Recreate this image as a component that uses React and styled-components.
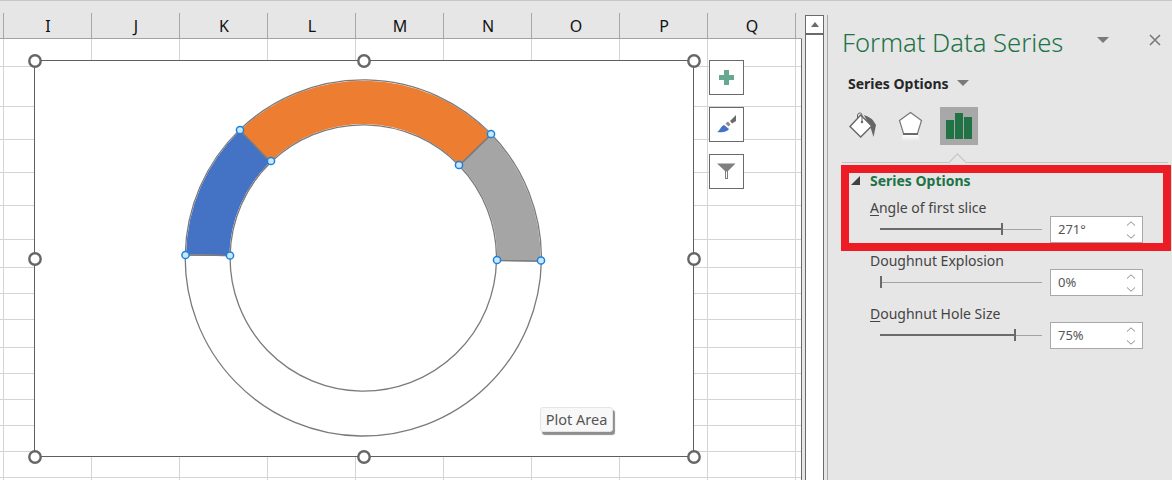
import React from 'react'
import styled, { createGlobalStyle } from 'styled-components'

const UI_FONT = '"Noto Sans", "Open Sans", "Liberation Sans", sans-serif'

const columns = ['I', 'J', 'K', 'L', 'M', 'N', 'O', 'P', 'Q']
const rowHeights = [28, 40, 33, 33, 33, 34, 28, 26, 26, 28, 26, 26, 26, 26, 26, 3]

const CX = 363.3
const CY = 258
const OUTER = 177.8
const INNER = 133.5

const slices = [
  { from: 271, to: 316, fill: '#4472c4' },
  { from: 316, to: 406, fill: '#ed7d31' },
  { from: 406, to: 451, fill: '#a5a5a5' },
  { from: 451, to: 631, fill: 'none' },
]

const handles = [
  [35, 61], [364, 61], [694, 61],
  [35, 259], [694, 259],
  [35, 457], [364, 457], [694, 457],
]

const points = [
  [240, 130], [271, 161], [491, 134], [459, 165],
  [185.5, 255], [230, 255.5], [497, 260], [541, 260.5],
]

const fields = [
  { label: 'Angle of first slice', key: 'A', rest: 'ngle of first slice', value: '271°', fill: 122 },
  { label: 'Doughnut Explosion', rest: 'Doughnut Explosion', value: '0%', fill: 1 },
  { label: 'Doughnut Hole Size', key: 'D', rest: 'oughnut Hole Size', value: '75%', fill: 135 },
]

const polar = (r, deg) => {
  const a = (deg * Math.PI) / 180
  return [CX + r * Math.sin(a), CY - r * Math.cos(a)]
}

const slicePath = (from, to, grow = 0) => {
  const ro = OUTER + grow
  const ri = INNER - grow
  const large = to - from > 180 ? 1 : 0
  const [ax, ay] = polar(ro, from)
  const [bx, by] = polar(ro, to)
  const [cx, cy] = polar(ri, to)
  const [dx, dy] = polar(ri, from)
  return `M${ax} ${ay}A${ro} ${ro} 0 ${large} 1 ${bx} ${by}L${cx} ${cy}A${ri} ${ri} 0 ${large} 0 ${dx} ${dy}Z`
}

const Global = createGlobalStyle`
  html, body {
    margin: 0;
    padding: 0;
    overflow: hidden;
    background: #e6e6e6;
  }
  * {
    box-sizing: border-box;
  }
`

const Window = styled.div`
  display: flex;
  width: 1172px;
  height: 480px;
  overflow: hidden;
  background: #e6e6e6;
  border-top: 1px solid #c6c6c6;
  font-family: ${UI_FONT};
`

const Sheet = styled.div`
  position: relative;
  width: 802px;
  flex: none;
`

const ColumnBar = styled.div`
  display: flex;
  height: 38px;
  border-bottom: 1px solid #a3a3a3;
`

const ColumnHead = styled.div`
  width: ${(p) => p.$w}px;
  display: flex;
  align-items: center;
  justify-content: center;
  padding-top: 13px;
  font-size: 16px;
  line-height: 24px;
  color: #111;
  background: linear-gradient(#a8a8a8, #a8a8a8) right bottom / 1px 25px no-repeat;
`

const Cells = styled.div`
  background: #fff;
  border-right: 1px solid #6a6a6a;
`

const Row = styled.div`
  display: flex;
  height: ${(p) => p.$h}px;
  border-bottom: 1px solid #d4d4d4;
`

const Cell = styled.div`
  width: ${(p) => p.$w}px;
  border-right: 1px solid #d4d4d4;
`

const ChartFrame = styled.div`
  position: absolute;
  left: 34px;
  top: 59px;
  width: 660px;
  height: 397px;
  background: #fff;
  border: 1px solid #5f5f5f;
`

const ChartArt = styled.svg`
  position: absolute;
  left: -1px;
  top: -1px;
  overflow: visible;
`

const ChartTools = styled.div`
  position: absolute;
  left: 709px;
  top: 59px;
  display: flex;
  flex-direction: column;
  gap: 12px;
`

const ToolButton = styled.div`
  width: 35px;
  height: 35px;
  background: #fff;
  border: 1px solid #6a6a6a;
`

const Tip = styled.div`
  position: absolute;
  left: 540px;
  top: 406px;
  width: 73px;
  height: 25px;
  display: flex;
  align-items: center;
  justify-content: center;
  padding-bottom: 2px;
  font-size: 14.5px;
  color: #555;
  background: #f8f8f8;
  border: 1px solid #e4e4e4;
  border-radius: 3px;
  box-shadow: 2px 3px 1px #8e8e8e;
`

const ScrollColumn = styled.div`
  width: 26px;
  flex: none;
  display: flex;
  justify-content: space-between;
  padding: 14px 0 0 3px;
`

const Scrollbar = styled.div`
  width: 19px;
  background: #fff;
  border: 1px solid #6a6a6a;
  border-bottom: 0;
`

const ScrollUp = styled.div`
  height: 19px;
  display: flex;
  align-items: center;
  justify-content: center;
  border-bottom: 2px solid #6a6a6a;

  &::before {
    content: '';
    border-left: 4px solid transparent;
    border-right: 4px solid transparent;
    border-bottom: 5px solid #6a6a6a;
  }
`

const PaneEdge = styled.div`
  width: 1px;
  background: #a9a9a9;
`

const Pane = styled.aside`
  position: relative;
  flex: 1;
  padding-top: 22px;
  color: #444;
`

const PaneHeader = styled.header`
  display: flex;
  align-items: center;
  height: 36px;
  padding-left: 14px;
`

const PaneTitle = styled.h1`
  margin: 4px 0 0;
  flex: 1;
  font-size: 25.6px;
  font-weight: 300;
  line-height: 36px;
  white-space: nowrap;
  color: #217346;
`

const Caret = styled.span`
  width: 0;
  height: 0;
  flex: none;
  border-left: 6px solid transparent;
  border-right: 6px solid transparent;
  border-top: 6px solid #7a7a7a;
`

const MenuCaret = styled(Caret)`
  margin-right: 40px;
  margin-top: -2px;
`

const CloseIcon = styled.svg`
  margin-right: 11px;
  margin-top: -2px;
  flex: none;
`

const OptionsMenu = styled.div`
  display: flex;
  align-items: center;
  gap: 8px;
  height: 20px;
  margin-top: 14px;
  padding-left: 20px;
  font-size: 14px;
  font-weight: 700;
  color: #262626;
`

const Tabs = styled.div`
  display: flex;
  gap: 10px;
  margin-top: 14px;
  padding-left: 16px;
`

const Tab = styled.div`
  width: 38px;
  height: 38px;
  background: ${(p) => (p.$active ? '#a8a8a8' : 'transparent')};
`

const TabRule = styled.div`
  position: relative;
  margin: 17px 4px 0 14px;
  height: 1px;
  background: #c4c4c4;

  &::after {
    content: '';
    position: absolute;
    left: 109px;
    top: -6px;
    width: 12px;
    height: 12px;
    background: #e6e6e6;
    border-top: 1px solid #c4c4c4;
    border-left: 1px solid #c4c4c4;
    transform: rotate(45deg);
  }
`

const SectionTitle = styled.div`
  display: flex;
  align-items: center;
  gap: 10px;
  height: 20px;
  margin-top: 7px;
  padding-left: 23px;
  font-size: 14px;
  font-weight: 700;
  color: #217346;
`

const Fields = styled.div`
  display: flex;
  flex-direction: column;
  gap: 8px;
  margin-top: 8px;
  padding-left: 42px;
`

const FieldLabel = styled.div`
  height: 18px;
  font-size: 14px;
  line-height: 19px;
  color: #444;

  u {
    text-underline-offset: 2px;
  }
`

const FieldControls = styled.div`
  display: flex;
  align-items: center;
  height: 27px;
  padding-left: 10px;
`

const Slider = styled.div`
  position: relative;
  width: 162px;
  height: 1px;
  background: #a3a3a3;
`

const SliderFill = styled.div`
  position: absolute;
  left: 0;
  top: -1px;
  height: 2px;
  background: #6a6a6a;
`

const SliderThumb = styled.div`
  position: absolute;
  top: -6px;
  width: 2px;
  height: 12px;
  background: #6a6a6a;
`

const Spinner = styled.div`
  display: flex;
  align-items: center;
  justify-content: space-between;
  width: 93px;
  height: 27px;
  margin-left: 8px;
  padding: 0 6px 0 7px;
  font-size: 13px;
  color: #555;
  background: #fff;
  border: 1px solid #a8a8a8;
`

const SpinnerValue = styled.span`
  margin-bottom: 2px;
`

const Arrows = styled.div`
  display: flex;
  flex-direction: column;
  gap: 8px;
`

const Callout = styled.div`
  position: absolute;
  left: 13px;
  top: 164px;
  width: 330px;
  height: 86px;
  border: 8px solid #ed1c24;
`

const Chevron = ({ up }) => (
  <svg width="10" height="5" viewBox="0 0 10 5" style={{ display: 'block' }}>
    <path d={up ? 'M1 4.5L5 .8L9 4.5' : 'M1 .5L5 4.2L9 .5'} fill="none" stroke="#8a8a8a" />
  </svg>
)

const FillIcon = () => (
  <svg width="38" height="38" viewBox="844 107 38 38">
    <path d="M864 115Q872 117 876 125L873.5 137L871 129Z" fill="#666" />
    <path d="M860.7 115L871.7 126L860.7 137L850 126.5Z" fill="#fff" stroke="#666" strokeWidth="1.4" />
    <path d="M857.5 119V115Q858 112.5 860.5 113Q862 113.5 862 115V121" fill="none" stroke="#666" />
    <circle cx="862" cy="122" r="1.2" fill="#666" />
  </svg>
)

const ShapeIcon = () => (
  <svg width="38" height="38" viewBox="892 107 38 38">
    <defs>
      <linearGradient id="shapeShine" x1="0" y1="0" x2="0" y2="1">
        <stop offset="0" stopColor="#fff" />
        <stop offset="1" stopColor="#fff" stopOpacity="0" />
      </linearGradient>
    </defs>
    <path d="M903 135L918 135L920 141L901 141Z" fill="url(#shapeShine)" />
    <path d="M910.5 112.5L921.5 120.5L917.5 133.5L903.5 133.5L899.5 120.5Z" fill="#fff" stroke="#777" strokeWidth="1.2" />
    <path d="M903 134H918" stroke="#6a6a6a" strokeWidth="2" />
  </svg>
)

const BarsIcon = () => (
  <svg width="38" height="38" viewBox="940 107 38 38">
    <path d="M946 120H954V139H946ZM955 113H963V139H955ZM964 117H972V139H964Z" fill="#217346" />
  </svg>
)

const PlusIcon = () => (
  <svg width="33" height="33" viewBox="0 0 33 33">
    <path d="M14 9H19V14H24V19H19V24H14V19H9V14H14Z" fill="#67a890" />
  </svg>
)

const BrushIcon = () => (
  <svg width="33" height="33" viewBox="0 0 33 33">
    <path d="M7 24C10 23 10 19 14 17L19 21C18 23 13 25 7 24Z" fill="#4472c4" />
    <path d="M15.5 15.5L18 13.5L20.5 16.5L18.5 18.5Z" fill="#8a8a8a" />
    <path d="M20 13L26 7V13L22 15.5Z" fill="#6a6a6a" />
  </svg>
)

const FunnelIcon = () => (
  <svg width="33" height="33" viewBox="0 0 33 33">
    <path d="M7 8.5H25.5L18 16V24H15V16Z" fill="#7f7f7f" />
    <path d="M16 16.5H17V23H16Z" fill="#fff" />
  </svg>
)

const App = () => {
  return (
    <>
      <Global />
      <Window>
        <Sheet>
          <ColumnBar>
            <ColumnHead $w={4} />
            {columns.map((c) => (
              <ColumnHead key={c} $w={88}>{c}</ColumnHead>
            ))}
          </ColumnBar>
          <Cells>
            {rowHeights.map((h, i) => (
              <Row key={i} $h={h}>
                <Cell $w={4} />
                {columns.map((c) => (
                  <Cell key={c} $w={88} />
                ))}
              </Row>
            ))}
          </Cells>
          <ChartFrame>
            <ChartArt width="660" height="397" viewBox="34 60 660 397">
              {slices.map((s) => (
                <path key={s.from} d={slicePath(s.from, s.to)} fill={s.fill} stroke={s.fill === 'none' ? 'none' : '#fff'} />
              ))}
              {slices.map((s) => (
                <path key={s.from} d={slicePath(s.from, s.to, 0.3)} fill="none" stroke="#7a7a7a" strokeWidth="1.3" />
              ))}
              {handles.map(([x, y]) => (
                <circle key={`${x}-${y}`} cx={x} cy={y} r="5.7" fill="#fff" stroke="#666" strokeWidth="2.4" />
              ))}
              {points.map(([x, y]) => (
                <circle key={`${x}-${y}`} cx={x} cy={y} r="3.6" fill="#cfe6f8" stroke="#1584e0" strokeWidth="1.5" />
              ))}
            </ChartArt>
          </ChartFrame>
          <ChartTools>
            <ToolButton><PlusIcon /></ToolButton>
            <ToolButton><BrushIcon /></ToolButton>
            <ToolButton><FunnelIcon /></ToolButton>
          </ChartTools>
          <Tip>Plot Area</Tip>
        </Sheet>

        <ScrollColumn>
          <Scrollbar>
            <ScrollUp />
          </Scrollbar>
          <PaneEdge />
        </ScrollColumn>

        <Pane>
          <PaneHeader>
            <PaneTitle>Format Data Series</PaneTitle>
            <MenuCaret />
            <CloseIcon width="12" height="12" viewBox="0 0 12 12">
              <path d="M1 1L11 11M11 1L1 11" stroke="#7a7a7a" strokeWidth="1.6" />
            </CloseIcon>
          </PaneHeader>
          <OptionsMenu>
            Series Options
            <Caret />
          </OptionsMenu>
          <Tabs>
            <Tab><FillIcon /></Tab>
            <Tab><ShapeIcon /></Tab>
            <Tab $active><BarsIcon /></Tab>
          </Tabs>
          <TabRule />
          <SectionTitle>
            <svg width="9" height="9" viewBox="0 0 9 9">
              <path d="M0 9H9V0Z" fill="#404040" />
            </svg>
            Series Options
          </SectionTitle>
          <Fields>
            {fields.map((f) => (
              <div key={f.label}>
                <FieldLabel>
                  {f.key && <u>{f.key}</u>}
                  {f.rest}
                </FieldLabel>
                <FieldControls>
                  <Slider>
                    <SliderFill style={{ width: f.fill }} />
                    <SliderThumb style={{ left: f.fill - 1 }} />
                  </Slider>
                  <Spinner>
                    <SpinnerValue>{f.value}</SpinnerValue>
                    <Arrows>
                      <Chevron up />
                      <Chevron />
                    </Arrows>
                  </Spinner>
                </FieldControls>
              </div>
            ))}
          </Fields>
          <Callout />
        </Pane>
      </Window>
    </>
  )
}

export default App
